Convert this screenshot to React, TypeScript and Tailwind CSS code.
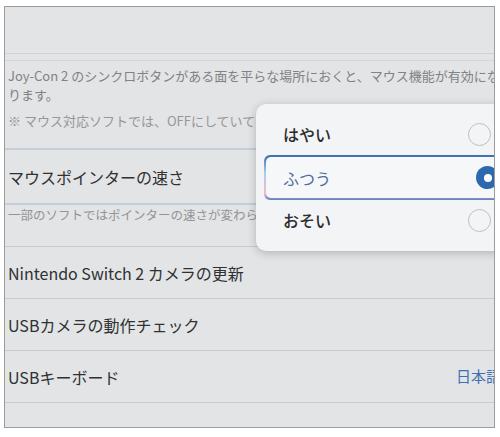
import React from 'react';

const font = { fontFamily: '"Noto Sans CJK JP", "Noto Sans", sans-serif' };

function Radio({ on }: { on?: boolean }) {
  if (on) {
    return (
      <span className="flex size-[23px] items-center justify-center rounded-full bg-[#2c69ad]">
        <span className="size-[8px] rounded-full bg-white" />
      </span>
    );
  }
  return <span className="size-[23px] rounded-full border-[1.5px] border-[#bdbfc1] bg-[#f3f4f5]" />;
}

function Row({ label, right }: { label: string; right?: string }) {
  return (
    <div className="flex h-[52px] items-center justify-between border-b border-[#c9cbcd] pl-[3px] text-[16px] text-[#2f3133]">
      <span>{label}</span>
      {right && <span className="mr-[-7px] text-[15px] text-[#3f6fb3]">{right}</span>}
    </div>
  );
}

export default function App() {
  return (
    <div className="h-[437px] w-[500px] bg-white pl-[4px] pt-[6px]" style={font}>
      <div className="relative h-[422px] w-[491px] overflow-hidden border border-[#9a9c9e] bg-[#e2e4e5]">
        {/* header */}
        <div className="h-[47px] border-b border-[#cfd1d3]" />
        <div className="mt-[6px] border-t border-[#d3d5d7]" />

        {/* description */}
        <div className="h-[89px] whitespace-nowrap border-b-2 border-[#c3cddc] pl-[3px] pt-[5px] text-[13px] leading-[19px] text-[#808284]">
          <p>
            Joy-Con 2 のシンクロボタンがある面を平らな場所におくと、マウス機能が有効にな
            <br />
            ります。
          </p>
          <p className="mt-[7px] text-[#95979a]">※ マウス対応ソフトでは、OFFにしていてください。</p>
        </div>

        <div className="flex h-[55px] items-center border-b-2 border-[#c3cddc] pl-[3px] text-[16px] text-[#2f3133]">
          マウスポインターの速さ
        </div>
        <div className="h-[42px] whitespace-nowrap border-b border-[#c9cbcd] pl-[3px] pt-[1px] text-[12.5px] text-[#929496]">
          一部のソフトではポインターの速さが変わらないことがあります。
        </div>

        <Row label="Nintendo Switch 2 カメラの更新" />
        <Row label="USBカメラの動作チェック" />
        <Row label="USBキーボード" right="日本語" />

        {/* speed menu */}
        <div className="absolute left-[251px] top-[97px] h-[147px] w-[260px] rounded-[10px] bg-[#f3f4f5] pt-[10px] shadow-[0_2px_10px_rgba(0,0,0,0.22)]">
          <div className="flex h-[40px] items-center justify-between pl-[27px] pr-[25px] text-[16px] font-medium text-[#2b2d2f]">
            はやい
            <Radio />
          </div>
          <div className="ml-[8px] mt-[1px] rounded-[6px] bg-[linear-gradient(to_bottom,#3b6cad,#a9cde8_40%,#efbccb_85%,#5f82bd)] p-[2px]">
            <div className="flex h-[41px] items-center justify-between rounded-[5px] bg-[#f6f7f8] pl-[17px] pr-[15px] text-[16px] text-[#4f6e9f]">
              ふつう
              <Radio on />
            </div>
          </div>
          <div className="flex h-[40px] items-center justify-between pl-[27px] pr-[25px] text-[16px] font-medium text-[#2b2d2f]">
            おそい
            <Radio />
          </div>
        </div>
      </div>
    </div>
  );
}
